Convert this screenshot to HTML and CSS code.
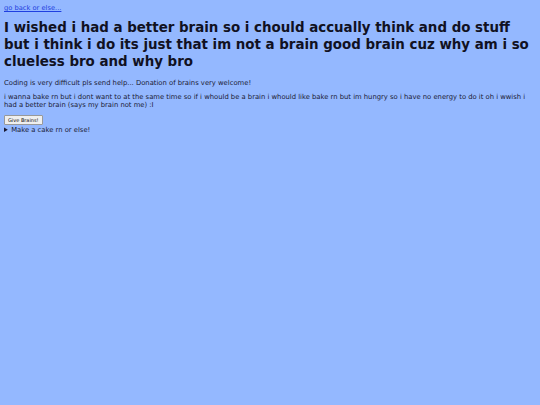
FILE: index.html
```html
<!DOCTYPE html>
<html lang="en">
<head>
    <meta charset="UTF-8">
    <meta name="viewport" content="width=device-width, initial-scale=1.0">
    <title>Brain Stuff</title>
    <link rel="stylesheet" href="styles.css">
</head>
<body>
    <a href="#" class="back-link">go back or else...</a>
    <h1 class="title">I wished i had a better brain so i chould accually think and do stuff but i think i do its just that im not a brain good brain cuz why am i so clueless bro and why bro</h1>
    <p class="text">Coding is very difficult pls send help... Donation of brains very welcome!</p>
    <p class="text">i wanna bake rn but i dont want to at the same time so if i whould be a brain i whould like bake rn but im hungry so i have no energy to do it oh i wwish i had a better brain (says my brain not me) :I</p>
    <button type="button" class="brain-btn">Give Brains!</button>
    <details class="cake">
        <summary>Make a cake rn or else!</summary>
        <p class="text">no cake yet...</p>
    </details>
</body>
</html>
```

FILE: styles.css
```css
body {
    background: #94b8ff;
    font-family: "DejaVu Sans", Verdana, sans-serif;
    font-size: 6.8px;
    color: #1a1a33;
    margin: 4px;
}

.back-link {
    display: block;
    color: #1f3fe0;
    font-size: 6.7px;
}

.title {
    font-size: 13.4px;
    line-height: 17px;
    color: #111122;
    margin: 7px 0 9px;
}

.text {
    margin: 0 0 6px;
    line-height: 8px;
}

.brain-btn {
    font-family: "DejaVu Sans", Verdana, sans-serif;
    font-size: 5px;
    padding: 1px 3px;
    background: #efefef;
    border: 1px solid #999;
    border-radius: 1px;
    color: #111;
}

.cake summary {
    margin-top: 1px;
    cursor: pointer;
}
```
